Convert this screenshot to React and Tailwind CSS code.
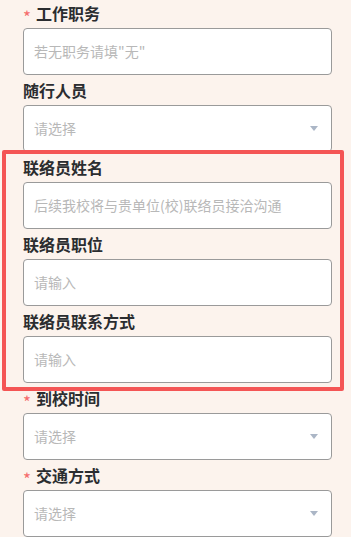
import React from 'react';

const fields = [
  { label: '工作职务', required: true, placeholder: '若无职务请填"无"', select: false },
  { label: '随行人员', required: false, placeholder: '请选择', select: true },
  { label: '联络员姓名', required: false, placeholder: '后续我校将与贵单位(校)联络员接洽沟通', select: false },
  { label: '联络员职位', required: false, placeholder: '请输入', select: false },
  { label: '联络员联系方式', required: false, placeholder: '请输入', select: false },
  { label: '到校时间', required: true, placeholder: '请选择', select: true },
  { label: '交通方式', required: true, placeholder: '请选择', select: true },
];

const Field = ({ label, required, placeholder, select }) => (
  <div className="flex flex-col">
    <div className="h-[30px] flex items-center">
      {required && (
        <span className="text-[#f56c6c] text-[17px] mr-[5px] leading-none translate-y-[3px]">*</span>
      )}
      <span className="text-[16px] font-bold text-[#2b2d30] leading-none">{label}</span>
    </div>
    <div className="h-[47px] bg-white border border-[#9a9a9a] rounded-[4px] flex items-center justify-between pl-[10px] pr-[13px]">
      <span className="text-[14px] text-[#b8b8b8] whitespace-nowrap">{placeholder}</span>
      {select && (
        <svg width="8" height="5" viewBox="0 0 8 5" className="shrink-0">
          <path d="M0 0H8L4 5Z" fill="#abb6c6" />
        </svg>
      )}
    </div>
  </div>
);

export default function App() {
  return (
    <div
      className="relative w-[351px] h-[537px] overflow-hidden bg-[#fcf3ed]"
      style={{ fontFamily: '"Noto Sans CJK SC", "Noto Sans", sans-serif' }}
    >
      <div className="flex flex-col pl-[23px] pr-[19px] -mt-[2px]">
        {fields.map((f) => (
          <Field key={f.label} {...f} />
        ))}
      </div>
      <div className="absolute left-[2px] top-[150px] w-[342px] h-[241px] border-4 border-[#f45555] rounded-[2px] pointer-events-none" />
    </div>
  );
}
